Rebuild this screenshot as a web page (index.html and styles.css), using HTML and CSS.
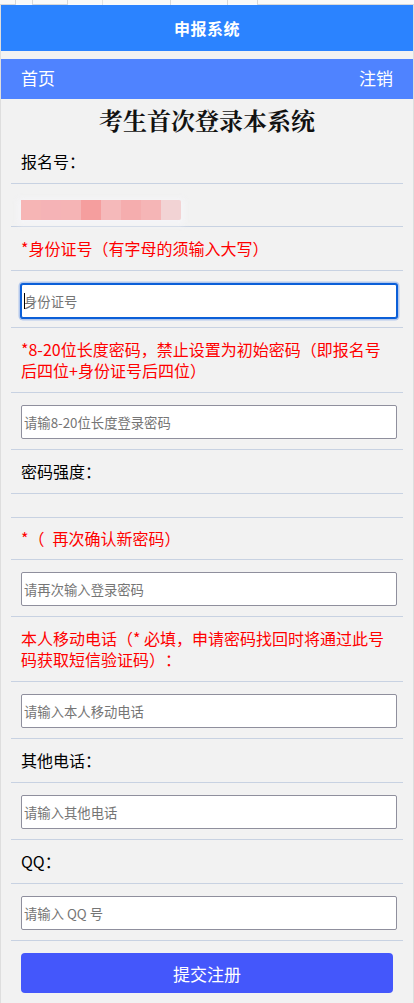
FILE: index.html
```html
<!DOCTYPE html>
<html lang="zh-CN">
<head>
<meta charset="utf-8">
<meta name="viewport" content="width=device-width, initial-scale=1">
<title>申报系统</title>
<link rel="stylesheet" href="styles.css">
</head>
<body>
<div class="strip">
  <span class="tab t1"></span>
  <span class="tab t2"></span>
  <span class="tab t3"></span>
  <span class="tab t4"></span>
  <span class="tab t5"></span>
  <span class="tab t6"></span>
</div>
<div class="page">
  <header class="topbar">申报系统</header>
  <nav class="navbar">
    <a class="nav-link">首页</a>
    <a class="nav-link">注销</a>
  </nav>
  <h1 class="title">考生首次登录本系统</h1>
  <form class="form">
    <div class="row label">报名号：</div>
    <div class="row blur-row">
      <div class="blur">
        <span class="px p1"></span><span class="px p2"></span><span class="px p3"></span><span class="px p4"></span><span class="px p5"></span><span class="px p6"></span><span class="px p7"></span><span class="px p8"></span>
      </div>
    </div>
    <div class="row label red">*身份证号（有字母的须输入大写）</div>
    <div class="row field focus-row"><input class="inp focused" type="text" placeholder="身份证号"><span class="caret"></span></div>
    <div class="row label red">*8-20位长度密码，禁止设置为初始密码（即报名号后四位+身份证号后四位）</div>
    <div class="row field"><input class="inp" type="password" placeholder="请输8-20位长度登录密码"></div>
    <div class="row label">密码强度：</div>
    <div class="row empty"></div>
    <div class="row label red short">*（&ensp;再次确认新密码）</div>
    <div class="row field"><input class="inp" type="password" placeholder="请再次输入登录密码"></div>
    <div class="row label red">本人移动电话（* 必填，申请密码找回时将通过此号码获取短信验证码）：</div>
    <div class="row field"><input class="inp" type="text" placeholder="请输入本人移动电话"></div>
    <div class="row label">其他电话：</div>
    <div class="row field"><input class="inp" type="text" placeholder="请输入其他电话"></div>
    <div class="row label">QQ：</div>
    <div class="row field"><input class="inp" type="text" placeholder="请输入 QQ 号"></div>
    <div class="actions"><button class="submit" type="button">提交注册</button></div>
  </form>
</div>
</body>
</html>
```
FILE: styles.css
```css
* { box-sizing: border-box; }
html, body {
  margin: 0;
  padding: 0;
  background: #f2f2f2;
  font-family: "Noto Sans CJK SC", "Noto Sans", sans-serif;
  color: #000;
  text-spacing-trim: space-all;
}
.strip {
  height: 5px;
  background: #f9f9f9;
  display: flex;
  overflow: hidden;
}
.tab { height: 5px; display: block; }
.t1 { width: 16px; border-right: 1px solid #d8d8d8; border-bottom: 1px solid #d8d8d8; }
.t2 { width: 36px; margin-left: 16px; border-left: 1px solid #d8d8d8; border-right: 1px solid #d8d8d8; border-bottom: 1px solid #d8d8d8; }
.t3 { width: 35px; border-right: 1px solid #e2e2e2; }
.t4 { width: 68px; border-right: 1px solid #d8d8d8; }
.t5 { width: 57px; border-right: 1px solid #d8d8d8; }
.t6 { flex: 1; margin-left: 29px; border-left: 1px solid #d8d8d8; border-bottom: 1px solid #d8d8d8; }
.page {
  width: 414px;
  border-left: 1px solid #dedede;
  border-right: 1px solid #dedede;
  min-height: 998px;
}
.topbar {
  height: 46px;
  background: #2b83ff;
  color: #fff;
  font-size: 16px;
  font-weight: 700;
  text-align: center;
  line-height: 46px;
  letter-spacing: 0.5px;
}
.navbar {
  margin-top: 8px;
  height: 40px;
  background: #4f83ff;
  display: flex;
  justify-content: space-between;
  align-items: center;
  padding: 0 20px 3px 20px;
}
.nav-link {
  color: #fff;
  font-size: 17px;
  text-decoration: none;
}
.title {
  margin: 0;
  padding-top: 1px;
  height: 41px;
  line-height: 39px;
  font-family: "Noto Serif CJK SC", "Noto Sans CJK SC", serif;
  font-size: 24px;
  font-weight: 700;
  text-align: center;
  color: #111;
}
.form { margin: 0; }
.row {
  margin: 0 10px;
  padding: 0 10px;
  border-bottom: 1px solid #c8d2e2;
}
.label {
  font-size: 16px;
  line-height: 21px;
  padding-top: 11px;
  padding-bottom: 11px;
}
.label.short { padding-top: 10px; padding-bottom: 10px; }
.red { color: #ff0000; }
.blur-row { padding-top: 16px; padding-bottom: 6px; }
.blur {
  display: flex;
  width: 160px;
  height: 20px;
  box-shadow: 0 2px 6px 3px rgba(245, 245, 248, 0.9);
}
.px { flex: 1; display: block; height: 20px; }
.p1 { background: #f6b5b5; }
.p2 { background: #f5b3b6; }
.p3 { background: #f5b4b5; }
.p4 { background: #f59e9e; }
.p5 { background: #f5b9ba; }
.p6 { background: #f5adae; }
.p7 { background: #f5b5b6; }
.p8 { background: #f2d3d4; border-radius: 0 2px 2px 0; }
.field {
  padding-top: 12px;
  padding-bottom: 10px;
}
.focus-row { padding-top: 13px; padding-bottom: 9px; position: relative; }
.inp {
  display: block;
  width: 376px;
  height: 34px;
  margin: 0;
  padding: 1px 2px;
  border: 1px solid #8f8f9d;
  border-radius: 2px;
  background: #fff;
  font-family: "Noto Sans CJK SC", "Noto Sans", sans-serif;
  font-size: 13.33px;
  color: #000;
  outline: none;
  text-spacing-trim: space-all;
}
.inp::placeholder { color: #757575; opacity: 1; }
.inp.focused {
  border-color: #0b5fd8;
  box-shadow: 0 0 0 1px #0b5fd8, 0 0 0 2.5px #b3c8ec;
}
.caret {
  position: absolute;
  left: 13px;
  top: 22px;
  width: 1px;
  height: 16px;
  background: #000;
}
.empty { height: 24px; }
.actions {
  padding: 12px 20px 10px 20px;
}
.submit {
  display: block;
  width: 372px;
  height: 40px;
  margin: 0;
  border: 0;
  border-radius: 4px;
  background: #4457fb;
  color: #fff;
  font-family: "Noto Sans CJK SC", "Noto Sans", sans-serif;
  font-size: 17px;
}
```
